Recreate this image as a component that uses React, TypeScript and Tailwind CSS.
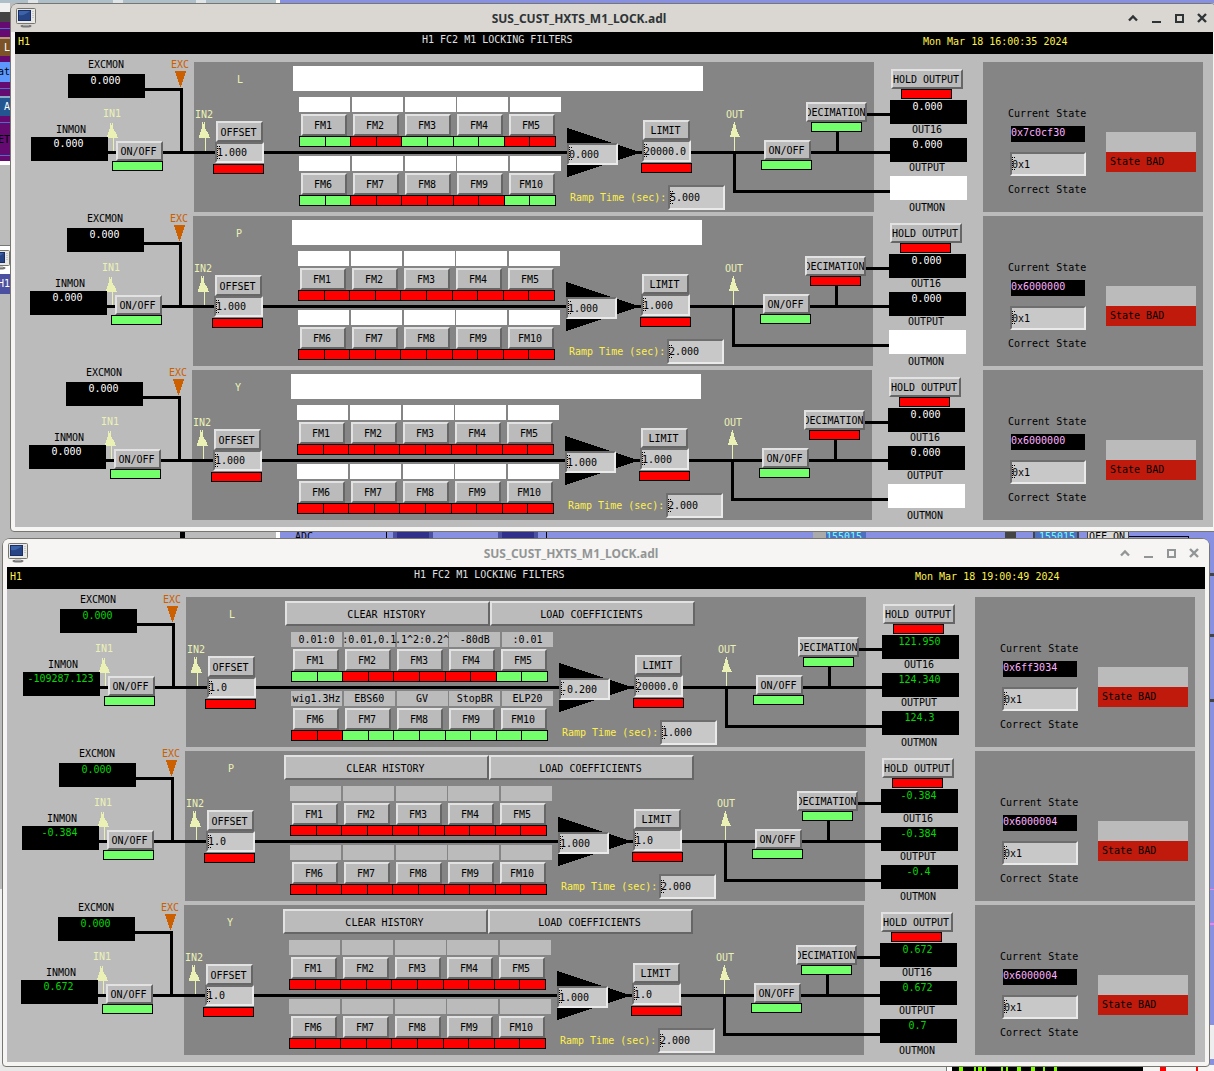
import clsx from "clsx";
import type { ReactNode } from "react";

type Channel = {
  name: string;
  excmon: string;
  inmon: string;
  offset: string;
  gain: string;
  limit: string;
  ramp: string;
  out16: string;
  output: string;
  outmon: string;
  filters: string[];
  leds: boolean[];
  decimation: boolean;
  state: string;
};

type Screen = {
  date: string;
  live: boolean;
  channels: Channel[];
};

const OFF = Array(10).fill(false);
const EMPTY = Array(10).fill("");
const ON = true;
const NO = false;

const before: Screen = {
  date: "Mon Mar 18 16:00:35 2024",
  live: false,
  channels: [
    {
      name: "L", excmon: "0.000", inmon: "0.000", offset: "1.000", gain: "0.000", limit: "20000.0", ramp: "5.000",
      out16: "0.000", output: "0.000", outmon: "", filters: EMPTY,
      leds: [ON, NO, ON, ON, NO, ON, NO, NO, NO, ON], decimation: true, state: "0x7c0cf30",
    },
    {
      name: "P", excmon: "0.000", inmon: "0.000", offset: "1.000", gain: "1.000", limit: "1.000", ramp: "2.000",
      out16: "0.000", output: "0.000", outmon: "", filters: EMPTY, leds: OFF, decimation: false, state: "0x6000000",
    },
    {
      name: "Y", excmon: "0.000", inmon: "0.000", offset: "1.000", gain: "1.000", limit: "1.000", ramp: "2.000",
      out16: "0.000", output: "0.000", outmon: "", filters: EMPTY, leds: OFF, decimation: false, state: "0x6000000",
    },
  ],
};

const after: Screen = {
  date: "Mon Mar 18 19:00:49 2024",
  live: true,
  channels: [
    {
      name: "L", excmon: "0.000", inmon: "-109287.123", offset: "1.0", gain: "-0.200", limit: "20000.0", ramp: "1.000",
      out16: "121.950", output: "124.340", outmon: "124.3",
      filters: ["0.01:0", ":0.01,0.1", ".1^2:0.2^", "-80dB", ":0.01", "wig1.3Hz", "EBS60", "GV", "StopBR", "ELP20"],
      leds: [ON, NO, NO, NO, ON, NO, ON, ON, ON, ON], decimation: true, state: "0x6ff3034",
    },
    {
      name: "P", excmon: "0.000", inmon: "-0.384", offset: "1.0", gain: "1.000", limit: "1.0", ramp: "2.000",
      out16: "-0.384", output: "-0.384", outmon: "-0.4", filters: EMPTY, leds: OFF, decimation: true, state: "0x6000004",
    },
    {
      name: "Y", excmon: "0.000", inmon: "0.672", offset: "1.0", gain: "1.000", limit: "1.0", ramp: "2.000",
      out16: "0.672", output: "0.672", outmon: "0.7", filters: EMPTY, leds: OFF, decimation: true, state: "0x6000004",
    },
  ],
};

const Btn = ({ className, children }: { className?: string; children: ReactNode }) => (
  <button
    type="button"
    className={clsx(
      "flex items-center justify-center overflow-hidden whitespace-nowrap border-2 border-t-[#e2e2e2] border-l-[#e2e2e2] border-r-[#666] border-b-[#666] bg-[#bbb] pt-0.5 pr-0.5 leading-3",
      className
    )}
  >
    {children}
  </button>
);

const Field = ({ className, label, value }: { className: string; label: string; value: string }) => (
  <div className={className}>
    <input
      aria-label={label}
      defaultValue={value}
      className="block h-full w-full border-2 border-t-[#6e6e6e] border-l-[#6e6e6e] border-r-[#eaeaea] border-b-[#eaeaea] bg-[#c8c8c8] leading-3 outline-none"
    />
    <svg className="pointer-events-none absolute top-1/2 left-px -mt-[7px]" width="5" height="13" viewBox="0 0 5 13" shapeRendering="crispEdges">
      <path d="M1 .5h1M3 .5h1M1.5 2v9M1 12.5h1M3 12.5h1" stroke="#000" strokeWidth="1" strokeDasharray="1 1" fill="none" />
    </svg>
  </div>
);

const Led = ({ on, className }: { on: boolean; className: string }) => (
  <div className={clsx("h-[10px] w-[51px] border border-black", on ? "bg-[#73ff6b]" : "bg-[#ff0000]", className)} />
);

const Readout = ({ live, value, className }: { live: boolean; value: string; className: string }) => (
  <div
    className={clsx(
      "h-6 w-[77px] pr-0.5 text-center whitespace-nowrap",
      value ? "bg-black" : "bg-white",
      live ? "text-[#00d800]" : "text-white",
      className
    )}
  >
    {value}
  </div>
);

const Wires = () => (
  <svg className="absolute top-0 left-0" width="968" height="150" viewBox="15 62 968 150" shapeRendering="crispEdges">
    <g fill="#000">
      <path d="M145 88h38v64h-3v-61h-35z" />
      <path d="M108 151h782v3h-782z" />
      <path d="M733 151h3v39h154v3h-157z" />
      <path d="M836 131h3v20h-3zM866 113h24v3h-24z" />
      <path d="M567 128l70 23v3l-70 23z" />
    </g>
    <path d="M175 71h11l-5 16h-1z" fill="#cc6000" />
    <g fill="#ebf1b5">
      <path d="M107 138l1-5 2-5v-5h1v2h1v-2h1v5l3 5 2 5h-4v13h-1v-13z" />
      <path d="M199 138l1-5 2-5v-6h1v2h1v-2h1v6l3 5 2 5h-4v13h-1v-13z" />
      <path d="M730 137l1-4 2-6 1-5h1l1 5 2 6 2 4h-5v14h-1v-14z" />
    </g>
  </svg>
);

const FilterRow = ({ channel, live, start, className }: { channel: Channel; live: boolean; start: number; className: string }) => (
  <div className={clsx("absolute left-[284px] flex flex-col", className)}>
    <div className="flex w-[262px] justify-between">
      {channel.filters.slice(start, start + 5).map((text, i) => (
        <div key={i} className={clsx("flex h-[15px] w-[51px] items-center justify-center whitespace-nowrap", live ? "bg-[#bbb]" : "bg-white")}>
          {text}
        </div>
      ))}
    </div>
    <div className="mt-0.5 ml-0.5 flex w-[254px] justify-between">
      {[1, 2, 3, 4, 5].map((n) => (
        <Btn key={n} className="h-[22px] w-[46px]">
          FM{start + n}
        </Btn>
      ))}
    </div>
    <div className="flex h-[11px] w-[257px] gap-px border border-black bg-black">
      {channel.leds.slice(start, start + 5).map((on, i) => (
        <div key={i} className="flex flex-1 gap-px">
          <div className={clsx("flex-1", on ? "bg-[#73ff6b]" : "bg-[#ff0000]")} />
          <div className={clsx("flex-1", on ? "bg-[#73ff6b]" : "bg-[#ff0000]")} />
        </div>
      ))}
    </div>
  </div>
);

const Diagram = ({ channel, live }: { channel: Channel; live: boolean }) => (
  <>
    <div className="absolute top-0 left-[179px] h-full w-[680px] bg-[#858585]" />
    <Wires />

    <span className="absolute -top-1 left-[73px]">EXCMON</span>
    <Readout live={live} value={channel.excmon} className="absolute top-3 left-[53px]" />
    <span className="absolute -top-1 left-[156px] text-[#cc6000]">EXC</span>
    <span className="absolute top-[45px] left-[88px] text-[#ebf1b5]">IN1</span>
    <span className="absolute top-[61px] left-[41px]">INMON</span>
    <Readout live={live} value={channel.inmon} className="absolute top-[75px] left-4" />
    <Btn className="absolute top-[79px] left-[101px] h-5 w-[47px]">ON/OFF</Btn>
    <Led on className="absolute top-[99px] left-[97px]" />

    <span className="absolute top-[46px] left-[180px] text-[#ebf1b5]">IN2</span>
    <span className="absolute top-[11px] left-[222px] text-[#ebf1b5]">{channel.name}</span>
    <Btn className="absolute top-[59px] left-[201px] h-[21px] w-[47px]">OFFSET</Btn>
    <Field label={`${channel.name} offset`} value={channel.offset} className="absolute top-[80px] left-[200px] h-[21px] w-[49px]" />
    <Led on={false} className="absolute top-[102px] left-[198px]" />

    {live ? (
      <div className="absolute top-1 left-[278px] flex h-[25px] w-[410px]">
        <Btn className="flex-1">CLEAR HISTORY</Btn>
        <Btn className="flex-1">LOAD COEFFICIENTS</Btn>
      </div>
    ) : (
      <div className="absolute top-1 left-[278px] h-[25px] w-[410px] bg-white" />
    )}
    <FilterRow channel={channel} live={live} start={0} className="top-[35px]" />
    <FilterRow channel={channel} live={live} start={5} className="top-[94px]" />

    <Field label={`${channel.name} gain`} value={channel.gain} className="absolute top-[81px] left-[552px] h-[22px] w-[51px]" />
    <Btn className="absolute top-[58px] left-[628px] h-5 w-[47px]">LIMIT</Btn>
    <Field label={`${channel.name} limit`} value={channel.limit} className="absolute top-[78px] left-[627px] h-[22px] w-[49px]" />
    <Led on={false} className="absolute top-[101px] left-[626px]" />
    <span className="absolute top-[129px] left-[555px] whitespace-nowrap text-[#fff04a]">Ramp Time (sec):</span>
    <Field label={`${channel.name} ramp time`} value={channel.ramp} className="absolute top-[123px] left-[653px] h-[25px] w-[57px]" />

    <span className="absolute top-[46px] left-[711px] text-[#ebf1b5]">OUT</span>
    <Btn className="absolute top-[78px] left-[749px] h-5 w-[47px]">ON/OFF</Btn>
    <Led on className="absolute top-[98px] left-[746px]" />
    <Btn className="absolute top-10 left-[791px] h-5 w-[61px]">
      <span className="flex-1 text-left">DECIMATION</span>
    </Btn>
    <Led on={channel.decimation} className="absolute top-[60px] left-[796px]" />

    <Btn className="absolute top-[7px] left-[876px] h-5 w-[72px]">HOLD OUTPUT</Btn>
    <Led on={false} className="absolute top-[27px] left-[886px]" />
    <Readout live={live} value={channel.out16} className="absolute top-[38px] left-[875px]" />
    <span className="absolute top-[61px] left-[897px]">OUT16</span>
    <Readout live={live} value={channel.output} className="absolute top-[76px] left-[875px]" />
    <span className="absolute top-[99px] left-[894px]">OUTPUT</span>
    <Readout live={live} value={channel.outmon} className="absolute top-[114px] left-[875px]" />
    <span className="absolute top-[139px] left-[894px]">OUTMON</span>
  </>
);

const StatePanel = ({ channel }: { channel: Channel }) => (
  <div className="flex w-[220px] shrink-0 bg-[#858585]">
    <div className="ml-[25px] w-[81px] pt-[45px]">
      <p>Current State</p>
      <p className="mt-[5px] ml-[3px] h-4 w-[74px] bg-black text-[#ffb0ff]">{channel.state}</p>
      <Field label={`${channel.name} correct state`} value="0x1" className="relative mt-[10px] ml-0.5 h-6 w-[76px]" />
      <p className="mt-[7px]">Correct State</p>
    </div>
    <div className="mt-[70px] ml-[17px] h-10 w-[90px] bg-[#bbb] pt-5">
      <p className="flex h-5 items-center bg-[#c01a0c] pl-1">State BAD</p>
    </div>
  </div>
);

// every channel of the panel sits one pixel further left than the one above
const rowShift = ["left-0", "-left-px", "-left-0.5"];

const MonitorIcon = () => (
  <svg className="shrink-0" width="20" height="20" viewBox="0 0 20 20">
    <ellipse cx="10" cy="18" rx="5.5" ry="1.5" fill="#777" />
    <path d="M7 16h6v1.500h-6z" fill="#ccc" />
    <rect x="0.500" y="0.500" width="19" height="15" rx="1" fill="#e8e8e4" stroke="#77776f" />
    <rect x="2" y="2" width="13" height="11" fill="#1b2d66" />
    <rect x="3" y="3" width="11" height="9" fill="#3c62a8" />
    <path d="M3 12V7c4 1 7-1 11-4v9z" fill="#274585" />
    <path d="M17 3v8" stroke="#aaa" strokeDasharray="1 1" />
  </svg>
);

const TitleBar = ({ active }: { active: boolean }) => (
  <header
    className={clsx(
      "relative flex h-7 items-center justify-between rounded-t-md pr-2 pl-[5px]",
      active ? "bg-[#dad6d2] text-[#2e3436]" : "bg-[#f6f5f4] text-[#929595]"
    )}
  >
    <MonitorIcon />
    <h1 className="absolute inset-x-0 top-[7px] pr-[70px] text-center font-['Noto_Sans','Open_Sans',sans-serif] text-xs leading-4 font-bold">
      SUS_CUST_HXTS_M1_LOCK.adl
    </h1>
    <div className="relative flex gap-[9px]">
      <button type="button" aria-label="Shade">
        <svg width="14" height="14" viewBox="0 0 14 14" fill="none" stroke="currentColor" strokeWidth="2.4">
          <path d="M3 9.500l4-4 4 4" />
        </svg>
      </button>
      <button type="button" aria-label="Minimize">
        <svg width="14" height="14" viewBox="0 0 14 14" fill="currentColor">
          <path d="M3 10h9v2h-9z" />
        </svg>
      </button>
      <button type="button" aria-label="Maximize">
        <svg width="14" height="14" viewBox="0 0 14 14" fill="none" stroke="currentColor" strokeWidth="2">
          <path d="M4 4h7v7h-7z" />
        </svg>
      </button>
      <button type="button" aria-label="Close">
        <svg width="14" height="14" viewBox="0 0 14 14" fill="none" stroke="currentColor" strokeWidth="2.400">
          <path d="M3 3l8 8M11 3l-8 8" />
        </svg>
      </button>
    </div>
  </header>
);

const AdlWindow = ({ screen, active, className }: { screen: Screen; active: boolean; className: string }) => (
  <section className={clsx("rounded-t-lg rounded-b-sm border border-[#77776f] bg-[#f6f5f4]", className)}>
    <TitleBar active={active} />
    <div className="mx-1 mb-1 bg-[#bbb]">
      <div className="flex h-[22px] bg-black text-[#fff04a]">
        <span className="w-[407px] pt-[3px] pl-[3px]">H1</span>
        <span className="w-[501px] pt-px text-[#e0e0e0]">H1 FC2 M1 LOCKING FILTERS</span>
        <span className="pt-[3px]">{screen.date}</span>
      </div>
      <div className="flex flex-col gap-1 pt-2 pr-[10px] pb-[7px]">
        {screen.channels.map((channel, i) => (
          <div key={channel.name} className="flex h-[150px]">
            <div className={clsx("relative flex-1", rowShift[i])}>
              <Diagram channel={channel} live={screen.live} />
            </div>
            <StatePanel channel={channel} />
          </div>
        ))}
      </div>
    </div>
  </section>
);

// slivers of the windows that lie under the two panels
const Backdrop = () => (
  <div className="absolute inset-0 flex flex-col overflow-hidden">
    <div className="flex h-[3px] shrink-0">
      <div className="flex w-[276px] gap-[10px] bg-[#dfe5e8]">
        <div className="w-7 bg-[#aebfc9]" />
        <div className="w-[75px] bg-[#aebfc9]" />
        <div className="w-[73px] bg-[#aebfc9]" />
        <div className="flex-1 bg-[#aebfc9]" />
      </div>
      <div className="w-1 bg-white" />
      <div className="flex-1 bg-[#8890e2]" />
    </div>
    <div className="flex h-[528px] shrink-0 flex-col bg-[#bbb]">
      <div className="h-[9px] w-[10px] bg-[#f0f0f0]" />
      <div className="h-[10px] w-[10px] bg-[#444]" />
      <div className="flex h-[143px] w-[10px] flex-col overflow-hidden border-b-4 border-white bg-[#640a70] pt-[6px] leading-3">
        <div className="h-px shrink-0 bg-[#4d6cc8]" />
        <div className="mt-2 flex h-[19px] items-center justify-end border-t-2 border-[#b89a78] bg-[#7c5328] text-white">L</div>
        <div className="mt-[6px] flex h-5 items-center justify-end bg-[#5d98ff]">at</div>
        <div className="mt-[6px] h-px shrink-0 bg-[#4d6cc8]" />
        <div className="mt-[7px] flex h-5 items-center justify-end border-t-2 border-[#88a8c8] bg-[#235590] text-white">A</div>
        <div className="mt-[6px] h-px shrink-0 bg-[#4d6cc8]" />
        <div className="mt-[11px] flex justify-end">ET</div>
        <div className="mt-[9px] h-px shrink-0 bg-[#4d6cc8]" />
      </div>
      <div className="mt-[80px] flex h-[29px] w-[10px] items-center justify-end overflow-hidden border-t border-[#777] bg-white">
        <MonitorIcon />
      </div>
      <div className="flex h-5 w-[10px] items-center justify-end overflow-hidden bg-[#4c50a0] text-white">H1</div>
    </div>
    <div className="flex h-2 shrink-0 overflow-hidden bg-[#8890e2] leading-3">
      <div className="w-[276px] bg-[#bbb] pl-[180px]">
        <div className="h-full w-[5px] bg-black" />
      </div>
      <div className="w-1 bg-white" />
      <div className="w-[107px] border-r border-black pl-[15px]">ADC</div>
      <div className="ml-[6px] w-10 border-x-4 border-[#4c50a0] bg-[#30308a]" />
      <div className="ml-[65px] w-10 border-x-4 border-[#4c50a0] bg-[#30308a]" />
      <div className="w-[9px] border-r border-black" />
      <div className="ml-[266px] w-[13px] bg-[#aaa]" />
      <div className="w-10 bg-[#4d70c0] text-[#7ff]">155015</div>
      <div className="ml-[139px] w-[11px] bg-[#444]" />
      <div className="ml-[17px] w-[46px] border-x-2 border-[#444] bg-[#4d70c0] pl-1 text-[#7ff]">155015</div>
      <div className="ml-2 w-[42px] border-x border-[#444] bg-[#d8d8d8] pl-px">OFF ON</div>
      <div className="mt-[5px] w-[60px] border-t border-r border-black" />
    </div>
    <div className="flex flex-1 justify-between">
      <div className="flex w-1 flex-col bg-[#bbb]">
        <div className="h-[350px]" />
        <div className="flex-1 bg-[#f0f0f0]" />
      </div>
      <div className="w-2 bg-[#8890e2]">
        <div className="mt-[34px] h-[3px] bg-[#444]" />
        <div className="mt-[58px] h-[3px] bg-[#444]" />
        <div className="mt-[62px] h-[3px] bg-[#444]" />
        <div className="mt-[187px] h-px bg-[#ff7fe0]" />
        <div className="mt-[33px] h-0.5 bg-[#ff7fe0]" />
        <div className="mt-[94px] h-10 border-t-[6px] border-[#8890e2] bg-[#eee]" />
      </div>
    </div>
    <div className="flex h-[6px] shrink-0 bg-[#e8e8e8]">
      <div className="w-[947px] border-r border-[#777]" />
      <div className="w-[5px] bg-white" />
      <div className="flex w-[191px] bg-black">
        <div className="ml-[7px] w-1 bg-[#80ff00]" />
        <div className="ml-[11px] w-0.5 bg-[#80ff00]" />
        <div className="ml-0.5 w-1 bg-[#80ff00]" />
        <div className="ml-0.5 w-0.5 bg-[#80ff00]" />
        <div className="ml-[15px] w-[7px] border-r-2 border-l-2 border-[#80ff00]" />
        <div className="ml-[9px] w-1 bg-[#80ff00]" />
        <div className="ml-[10px] w-1 bg-[#80ff00]" />
        <div className="ml-2 w-0.5 bg-[#80ff00]" />
        <div className="ml-[9px] w-[3px] bg-[#80ff00]" />
      </div>
      <div className="flex flex-1 bg-[#f6f5f4]">
        <div className="ml-[17px] w-1.5 bg-[#ff0000]" />
        <div className="ml-[30px] w-0.5 bg-[#ff0000]" />
      </div>
    </div>
  </div>
);

export default function App() {
  return (
    <main className="relative min-h-screen overflow-hidden bg-[#bbb] font-['DejaVu_Sans_Mono','Liberation_Mono',monospace] text-[10px] leading-[14px] text-black">
      <Backdrop />
      <AdlWindow screen={before} active className="absolute top-[3px] -right-1 left-[10px]" />
      <AdlWindow screen={after} active={false} className="absolute top-[538px] right-1 left-0.5" />
    </main>
  );
}
